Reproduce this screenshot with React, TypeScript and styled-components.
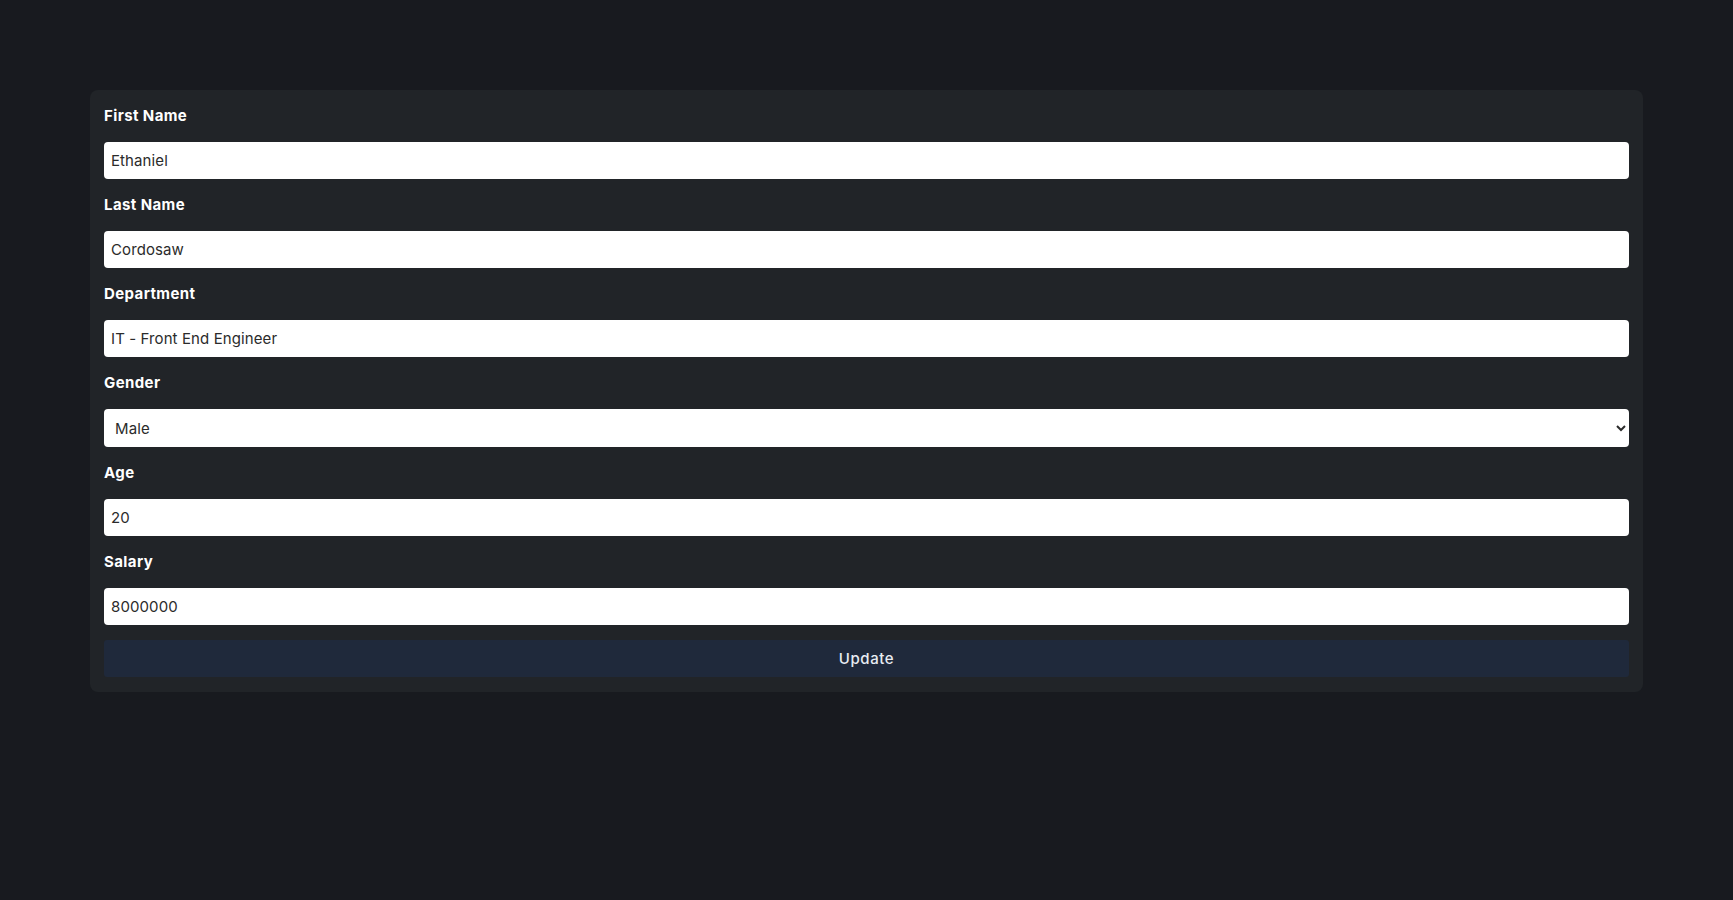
import React, { useState } from "react";
import styled, { createGlobalStyle } from "styled-components";

const GlobalStyle = createGlobalStyle`
  html, body {
    margin: 0;
    padding: 0;
    background: #181a1f;
  }
  body {
    font-family: Inter, "Noto Sans", "Liberation Sans", sans-serif;
  }
  * { box-sizing: border-box; }
`;

const Page = styled.div`
  min-height: 900px;
  background: #181a1f;
  padding: 90px 90px 0;
`;

const Card = styled.form`
  background: #212428;
  border-radius: 8px;
  padding: 15px 14px;
  display: flex;
  flex-direction: column;
  gap: 15px;
`;

const Label = styled.label`
  display: block;
  color: #ffffff;
  font-size: 15px;
  font-weight: 700;
  line-height: 22px;
  letter-spacing: 0.4px;
`;

const Input = styled.input`
  display: block;
  width: 100%;
  height: 37px;
  border: none;
  border-radius: 4px;
  background: #ffffff;
  color: #2b2b2b;
  font-family: inherit;
  font-size: 15px;
  letter-spacing: 0.1px;
  padding: 0 7px;
  outline: none;
`;

const Select = styled.select`
  display: block;
  width: 100%;
  height: 38px;
  border: none;
  border-radius: 4px;
  background: #ffffff;
  color: #2b2b2b;
  font-family: inherit;
  font-size: 15px;
  letter-spacing: 0.1px;
  padding: 0 7px;
  outline: none;
`;

const Button = styled.button`
  display: block;
  width: 100%;
  height: 37px;
  border: none;
  border-radius: 3px;
  background: #1f293b;
  color: #e8ecf2;
  font-family: inherit;
  font-size: 15px;
  font-weight: 500;
  letter-spacing: 0.6px;
  cursor: pointer;
`;

type Field = { id: string; label: string; value: string };

const fields: Field[] = [
  { id: "firstName", label: "First Name", value: "Ethaniel" },
  { id: "lastName", label: "Last Name", value: "Cordosaw" },
  { id: "department", label: "Department", value: "IT - Front End Engineer" },
];

const fieldsAfter: Field[] = [
  { id: "age", label: "Age", value: "20" },
  { id: "salary", label: "Salary", value: "8000000" },
];

export default function App() {
  const [gender, setGender] = useState("Male");
  return (
    <>
      <GlobalStyle />
      <Page>
        <Card onSubmit={(e) => e.preventDefault()}>
          {fields.map((f) => (
            <React.Fragment key={f.id}>
              <Label htmlFor={f.id}>{f.label}</Label>
              <Input id={f.id} defaultValue={f.value} />
            </React.Fragment>
          ))}
          <Label htmlFor="gender">Gender</Label>
          <Select id="gender" value={gender} onChange={(e) => setGender(e.target.value)}>
            <option>Male</option>
            <option>Female</option>
          </Select>
          {fieldsAfter.map((f) => (
            <React.Fragment key={f.id}>
              <Label htmlFor={f.id}>{f.label}</Label>
              <Input id={f.id} defaultValue={f.value} />
            </React.Fragment>
          ))}
          <Button type="submit">Update</Button>
        </Card>
      </Page>
    </>
  );
}
